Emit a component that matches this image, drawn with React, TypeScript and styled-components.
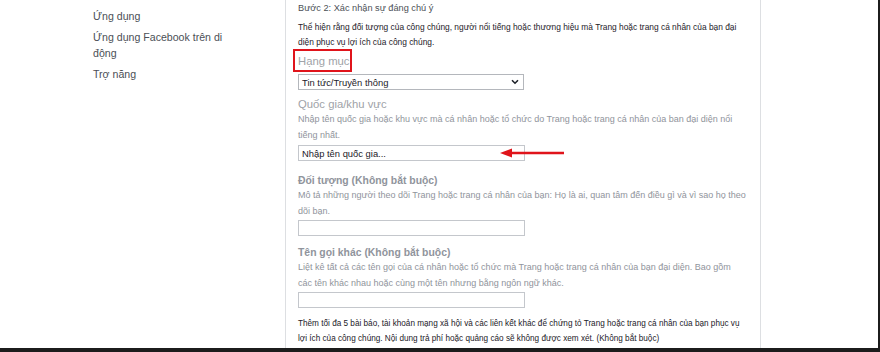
import React from 'react';
import styled, { createGlobalStyle } from 'styled-components';

const GlobalStyle = createGlobalStyle`
  html, body {
    margin: 0;
    padding: 0;
    background: #ffffff;
  }
  body {
    font-family: 'Liberation Sans', Arial, sans-serif;
  }
  #root {
    height: 352px;
    overflow: hidden;
  }
`;

const Page = styled.div`
  height: 352px;
  display: grid;
  grid-template-rows: 1fr 4px;
  background: #ffffff;
`;

const Main = styled.div`
  display: flex;
  min-height: 0;
  overflow: hidden;
`;

const BottomBar = styled.div`
  background: #1c1c1c;
`;

const Sidebar = styled.nav`
  width: 286px;
  flex-shrink: 0;
  border-right: 1px solid #dddfe2;
  padding: 8px 0 0 93px;
  box-sizing: border-box;
`;

const NavList = styled.ul`
  list-style: none;
  margin: 0;
  padding: 0;
  width: 140px;
  display: flex;
  flex-direction: column;
  gap: 5px;
`;

const NavItem = styled.li`
  font-size: 10.6px;
  line-height: 16px;
  color: #4b4f56;
`;

const Panel = styled.section`
  width: 475px;
  flex-shrink: 0;
  border-right: 1px solid #dddfe2;
  padding: 1px 10px 0 12px;
  box-sizing: border-box;
  display: flex;
  flex-direction: column;
`;

const Filler = styled.div`
  flex: 1;
`;

const EdgeStrip = styled.div`
  width: 2px;
  background: #1c1c1c;
`;

const StepTitle = styled.div`
  font-size: 9.2px;
  line-height: 14px;
  color: #4b4f56;
`;

const Paragraph = styled.p<{ $top: number; $size: number }>`
  margin: ${({ $top }) => $top}px 0 0;
  width: 451px;
  font-size: ${({ $size }) => $size}px;
  line-height: 15px;
  color: #1d2129;
`;

const Label = styled.div<{ $top: number; $bold?: boolean }>`
  margin-top: ${({ $top }) => $top}px;
  font-size: ${({ $bold }) => ($bold ? '10.4px' : '11.3px')};
  font-weight: ${({ $bold }) => ($bold ? 700 : 400)};
  line-height: 15px;
  color: ${({ $bold }) => ($bold ? '#90949c' : '#a0a3a8')};
`;

const Highlight = styled.span`
  position: relative;
  display: inline-block;

  &::after {
    content: '';
    position: absolute;
    left: -5px;
    right: -2px;
    top: -5px;
    bottom: -3px;
    border: 2.6px solid #e0141b;
  }
`;

const Description = styled.div`
  margin-top: -1px;
  width: 449px;
  font-size: 9px;
  line-height: 16px;
  color: #90949c;
`;

const SelectBox = styled.div`
  margin-top: 5px;
  width: 226px;
  height: 16px;
  box-sizing: border-box;
  border: 1px solid #b4b7bc;
  display: flex;
  align-items: center;
  justify-content: space-between;
  padding: 0 4px 0 3px;
  font-size: 9.4px;
  color: #1d2129;
`;

const TextInput = styled.div<{ $top: number }>`
  position: relative;
  margin-top: ${({ $top }) => $top}px;
  width: 227px;
  height: 16px;
  box-sizing: border-box;
  border: 1px solid #c4c7cc;
  display: flex;
  align-items: center;
  padding: 0 3px;
  font-size: 9.4px;
  color: #1d2129;
`;

const Pointer = styled.svg`
  position: absolute;
  left: 199px;
  top: 0px;
`;

const Chevron = () => (
  <svg width="8" height="6" viewBox="0 0 8 6">
    <path d="M1 1.2 L4 4.2 L7 1.2" fill="none" stroke="#1d2129" strokeWidth="1.6" />
  </svg>
);

export default function App() {
  return (
    <>
      <GlobalStyle />
      <Page>
        <Main>
          <Sidebar>
            <NavList>
              <NavItem>Ứng dụng</NavItem>
              <NavItem>Ứng dụng Facebook trên di động</NavItem>
              <NavItem>Trợ năng</NavItem>
            </NavList>
          </Sidebar>
          <Panel>
            <StepTitle>Bước 2: Xác nhận sự đáng chú ý</StepTitle>
            <Paragraph $top={5} $size={8.4}>
              Thể hiện rằng đối tượng của công chúng, người nổi tiếng hoặc thương hiệu mà Trang hoặc trang cá nhân của bạn đại diện phục vụ lợi ích của công chúng.
            </Paragraph>
            <Label $top={4}>
              <Highlight>Hạng mục</Highlight>
            </Label>
            <SelectBox>
              <span>Tin tức/Truyền thông</span>
              <Chevron />
            </SelectBox>

            <Label $top={7}>Quốc gia/khu vực</Label>
            <Description>
              Nhập tên quốc gia hoặc khu vực mà cá nhân hoặc tổ chức do Trang hoặc trang cá nhân của ban đại diện nổi tiếng nhất.
            </Description>
            <TextInput $top={2}>
              Nhập tên quốc gia...
              <Pointer width="68" height="14" viewBox="0 0 68 14">
                <path d="M66 7 L12 7" stroke="#e0141b" strokeWidth="2.4" />
                <path d="M2 7 L14 2.5 L14 11.5 Z" fill="#e0141b" />
              </Pointer>
            </TextInput>

            <Label $top={12} $bold>Đối tượng (Không bắt buộc)</Label>
            <Description>
              Mô tả những người theo dõi Trang hoặc trang cá nhân của bạn: Họ là ai, quan tâm đến điều gì và vì sao họ theo dõi bạn.
            </Description>
            <TextInput $top={1} />

            <Label $top={9} $bold>Tên gọi khác (Không bắt buộc)</Label>
            <Description>
              Liệt kê tất cả các tên gọi của cá nhân hoặc tổ chức mà Trang hoặc trang cá nhân của bạn đại diện. Bao gồm các tên khác nhau hoặc cùng một tên nhưng bằng ngôn ngữ khác.
            </Description>
            <TextInput $top={1} />

            <Paragraph $top={8} $size={8.2}>
              Thêm tối đa 5 bài báo, tài khoản mạng xã hội và các liên kết khác để chứng tỏ Trang hoặc trang cá nhân của bạn phục vụ lợi ích của công chúng. Nội dung trả phí hoặc quảng cáo sẽ không được xem xét. (Không bắt buộc)
            </Paragraph>
          </Panel>
          <Filler />
          <EdgeStrip />
        </Main>
        <BottomBar />
      </Page>
    </>
  );
}
